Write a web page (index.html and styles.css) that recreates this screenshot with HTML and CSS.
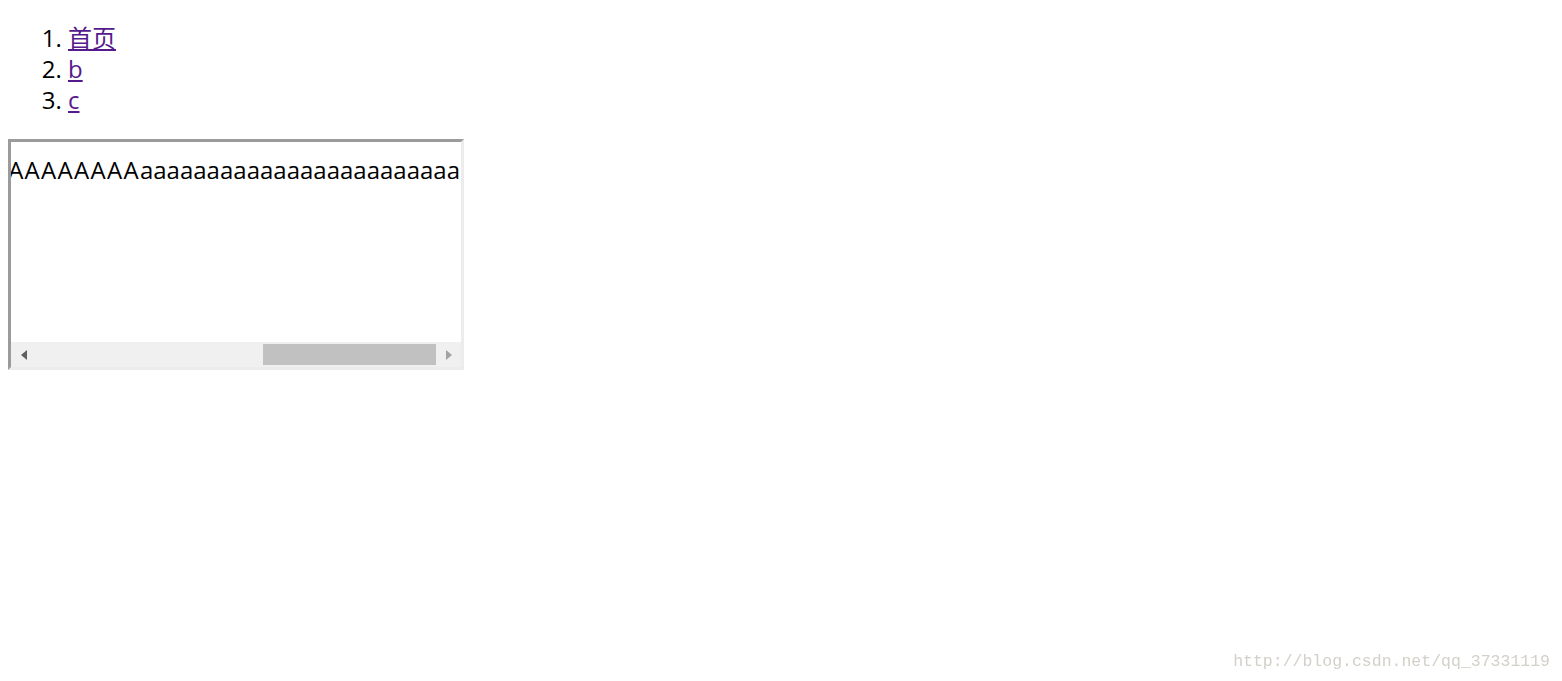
FILE: index.html
```html
<!DOCTYPE html>
<html lang="zh">
<head>
    <meta charset="UTF-8">
    <title>iframe</title>
    <link rel="stylesheet" href="styles.css">
</head>
<body>
    <ol class="nav">
        <li><a href="#">首页</a></li>
        <li><a href="#">b</a></li>
        <li><a href="#">c</a></li>
    </ol>

    <div class="frame">
        <div class="view">
            <p class="line"><span class="caps">AAAAAAAA</span>aaaaaaaaaaaaaaaaaaaaaaaa</p>
        </div>
        <div class="hscroll">
            <div class="arrow">
                <svg width="6" height="10" viewBox="0 0 6 10"><path d="M6 0 L0 5 L6 10 Z" fill="#606060"/></svg>
            </div>
            <div class="track">
                <div class="thumb"></div>
            </div>
            <div class="arrow">
                <svg width="6" height="10" viewBox="0 0 6 10"><path d="M0 0 L6 5 L0 10 Z" fill="#a3a3a3"/></svg>
            </div>
        </div>
    </div>

    <div class="watermark">http://blog.csdn.net/qq_37331119</div>
</body>
</html>
```

FILE: styles.css
```css
html, body {
    height: 100%;
}
body {
    margin: 8px;
    font-family: "Open Sans", "Noto Sans CJK SC", sans-serif;
    font-size: 24px;
    line-height: 31px;
    color: #000;
    background: #fff;
}
.nav {
    margin: 14px 0 24px 0;
    padding-left: 60px;
}
.nav a {
    color: #551a8b;
}

/* the framed page, scrolled to its right end */
.frame {
    width: 450px;
    height: 225px;
    border-style: solid;
    border-width: 3px;
    border-color: #9b9b9b #ececec #ececec #9b9b9b;
    display: flex;
    flex-direction: column;
}
.view {
    flex: 1;
    display: flex;
    justify-content: flex-end;
    align-items: flex-start;
    overflow: hidden;
    padding: 12px 1px 0 0;
}
.line {
    margin: 0;
    flex: none;
    white-space: nowrap;
}
.caps {
    letter-spacing: 1.3px;
}
.hscroll {
    height: 25px;
    background: #f0f0f0;
    display: flex;
}
.arrow {
    width: 25px;
    display: flex;
    align-items: center;
    justify-content: center;
}
.arrow svg {
    display: block;
}
.track {
    flex: 1;
    display: flex;
    justify-content: flex-end;
    padding: 2px 0;
}
.thumb {
    width: 173px;
    background: #c1c1c1;
}

.watermark {
    position: fixed;
    right: 12px;
    bottom: 9px;
    font-family: "Liberation Mono", monospace;
    font-size: 16.5px;
    line-height: 20px;
    color: #d3d0c9;
}
```
